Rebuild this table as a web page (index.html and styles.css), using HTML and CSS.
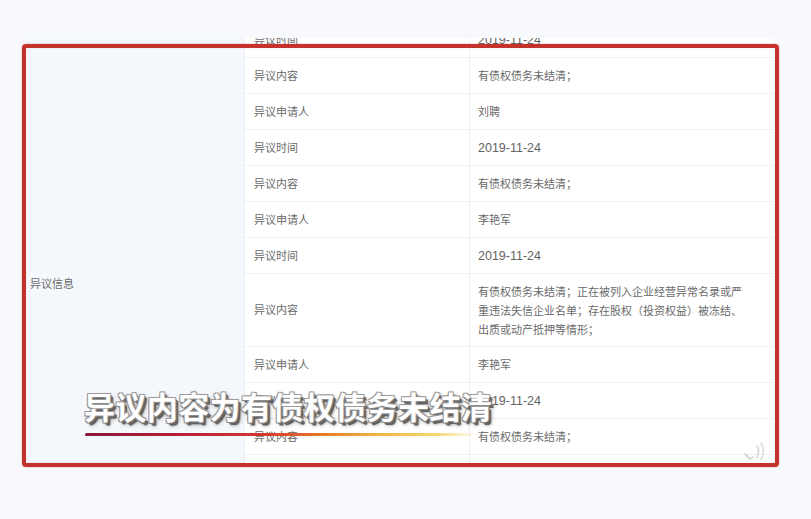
FILE: index.html
```html
<!DOCTYPE html>
<html lang="zh-CN">
<head>
<meta charset="utf-8">
<title>异议信息</title>
<link rel="stylesheet" href="styles.css">
</head>
<body>
<div class="stage">
  <div class="viewport">
    <div class="table">
      <div class="label-col"><span>异议信息</span></div>
      <div class="rows">
        <div class="row"><div class="key">异议时间</div><div class="val date">2019-11-24</div></div>
        <div class="row"><div class="key">异议内容</div><div class="val">有债权债务未结清；</div></div>
        <div class="row"><div class="key">异议申请人</div><div class="val">刘聘</div></div>
        <div class="row"><div class="key">异议时间</div><div class="val date">2019-11-24</div></div>
        <div class="row"><div class="key">异议内容</div><div class="val">有债权债务未结清；</div></div>
        <div class="row"><div class="key">异议申请人</div><div class="val">李艳军</div></div>
        <div class="row"><div class="key">异议时间</div><div class="val date">2019-11-24</div></div>
        <div class="row tall"><div class="key">异议内容</div><div class="val wrap">有债权债务未结清；正在被列入企业经营异常名录或严重违法失信企业名单；存在股权（投资权益）被冻结、出质或动产抵押等情形；</div></div>
        <div class="row"><div class="key">异议申请人</div><div class="val">李艳军</div></div>
        <div class="row"><div class="key">异议时间</div><div class="val date">2019-11-24</div></div>
        <div class="row"><div class="key">异议内容</div><div class="val">有债权债务未结清；</div></div>
        <div class="row"><div class="key">异议申请人</div><div class="val">李艳军</div></div>
      </div>
    </div>
  </div>
  <div class="frame"></div>
  <div class="subtitle">异议内容为有债权债务未结清</div>
  <div class="underline"></div>
  <svg class="mark" width="26" height="22" viewBox="0 0 26 22">
    <path d="M3 14 L8 19 L11 17" fill="none" stroke="#d8d8d8" stroke-width="2" stroke-linecap="round"/>
    <path d="M15 6 Q18 11 15 17" fill="none" stroke="#dcdcdc" stroke-width="2" stroke-linecap="round"/>
    <path d="M19 3 Q24 11 19 19" fill="none" stroke="#e2e2e2" stroke-width="2" stroke-linecap="round"/>
  </svg>
</div>
</body>
</html>
```

FILE: styles.css
```css
* { box-sizing: border-box; }
html, body {
  margin: 0;
  padding: 0;
}
body {
  background: #f8f9fc;
  font-family: "Liberation Sans", "Noto Sans CJK SC", sans-serif;
  font-size: 11px;
  color: #6a6a6a;
  width: 811px;
  height: 519px;
  overflow: hidden;
}
.stage {
  position: relative;
  width: 811px;
  height: 519px;
  padding-top: 38px;
  padding-left: 22px;
}
.viewport {
  width: 751px;
  height: 428px;
  overflow: hidden;
  background: #fff;
}
.table {
  display: flex;
  margin-top: -16px;
}
.label-col {
  width: 223px;
  flex: none;
  background: #f4f7fc;
  padding: 252px 0 0 8px;
  line-height: 20px;
  border-right: 1px solid #eceff3;
}
.rows {
  display: flex;
  flex-direction: column;
  width: 528px;
}
.row {
  display: grid;
  grid-template-columns: 225px 303px;
  height: 36px;
  border-bottom: 1px solid #eef0f4;
  background: #fff;
}
.row.tall { height: 73px; }
.key, .val {
  display: flex;
  align-items: center;
  line-height: 20px;
}
.key {
  padding-left: 9px;
  border-right: 1px solid #eef0f4;
}
.val {
  padding-left: 8px;
  padding-right: 27px;
}
.date { font-size: 12.5px; color: #636363; }
.wrap {
  display: block;
  align-self: center;
  line-height: 19px;
  padding-top: 2px;
}
.frame {
  position: absolute;
  left: 22px;
  top: 44px;
  width: 757px;
  height: 423px;
  border: 4px solid #c4322d;
  border-radius: 4px;
  box-shadow: 0 0 2px rgba(200, 50, 40, 0.45), inset 0 0 1px rgba(200, 50, 40, 0.4);
}
.subtitle {
  position: absolute;
  left: 84px;
  top: 384px;
  font-family: "Noto Sans CJK SC", sans-serif;
  font-weight: 700;
  font-size: 31px;
  letter-spacing: 0.4px;
  line-height: 44px;
  color: #fff;
  text-shadow:
    -1px -1px 0 #9a9a9a,
    1px -1px 0 #9a9a9a,
    -1px 1px 0 #8a8a8a,
    1px 1px 0 #777,
    2px 2px 0 #666,
    3px 3px 1px #555,
    3px 3px 4px rgba(0, 0, 0, 0.35);
}
.underline {
  position: absolute;
  left: 85px;
  top: 433px;
  width: 392px;
  height: 3px;
  border-radius: 2px;
  background: linear-gradient(90deg, #8a1838 0%, #b8203a 25%, #d2382e 45%, #e6782c 60%, #efb545 75%, #f4d978 90%, rgba(250, 232, 160, 0) 100%);
}
.mark {
  position: absolute;
  left: 742px;
  top: 440px;
}
```
